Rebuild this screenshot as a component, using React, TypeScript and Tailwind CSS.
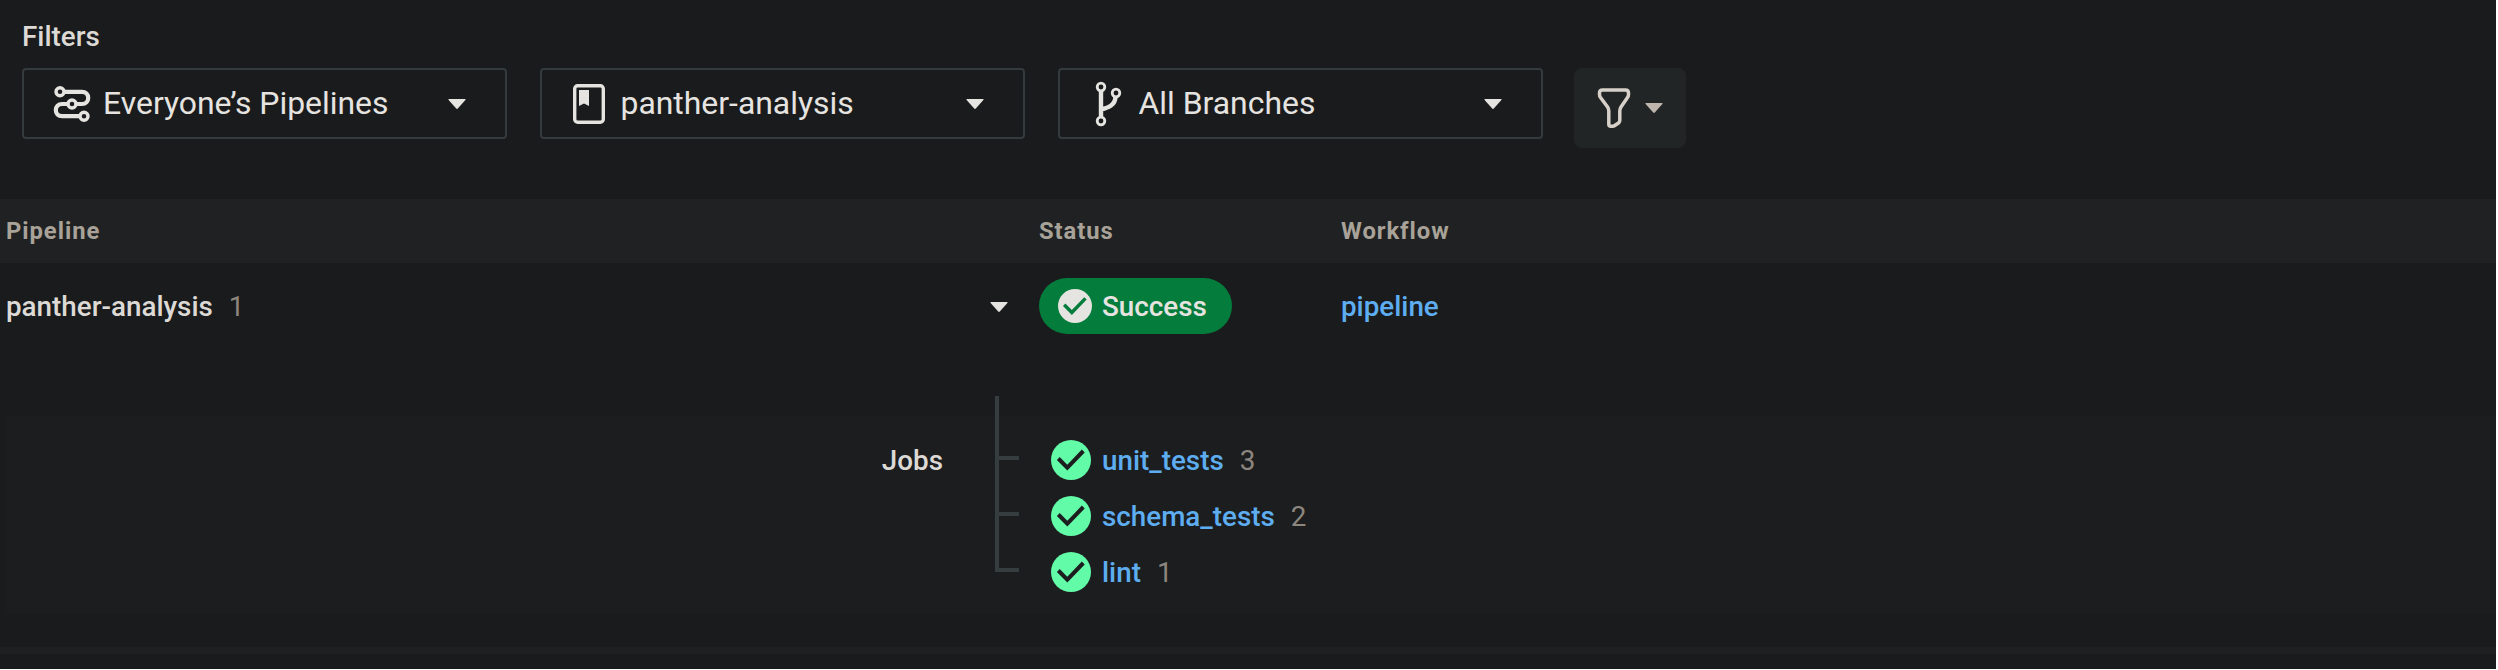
import React from "react";

const Caret = ({ className = "" }: { className?: string }) => (
  <svg viewBox="0 0 18 10" className={`h-[10px] w-[18px] shrink-0 ${className}`} fill="currentColor">
    <path d="M1 0h16q1 .3.4 1L9.800 9.500q-.8.800-1.600 0L.600 1Q0 .3 1 0z" />
  </svg>
);

const PipelinesIcon = () => (
  <svg viewBox="0 0 36 36" className="h-9 w-9 overflow-visible" fill="none" stroke="currentColor" strokeWidth="3.400">
    <circle cx="6" cy="5.800" r="4" />
    <circle cx="18" cy="18" r="4" />
    <circle cx="30" cy="30.200" r="4" />
    <path
      d="M10 5.800h18c3.800 0 6.200 2.500 6.200 6.100S31.800 18 28 18h-6M14 18H8c-3.800 0-6.200 2.500-6.200 6.100s2.400 6.100 6.200 6.100h18"
      strokeWidth="4.200"
    />
  </svg>
);

const RepoIcon = () => (
  <svg viewBox="0 0 32 40" className="h-10 w-8">
    <rect x="1.700" y="1.700" width="28.600" height="36.600" rx="3" fill="none" stroke="currentColor" strokeWidth="3.400" />
    <path d="M6 6h10v16l-5-2.500L6 22z" fill="currentColor" />
  </svg>
);

const BranchIcon = () => (
  <svg viewBox="0 0 28 46" className="h-[46px] w-7" fill="none" stroke="currentColor" strokeWidth="2.800">
    <circle cx="6" cy="6" r="3.800" />
    <circle cx="6" cy="40" r="3.800" />
    <circle cx="21" cy="12" r="3.800" />
    <path d="M6 10v26M6 28.500c8-2 14-4.500 14.500-12.500" strokeWidth="4.400" />
  </svg>
);

const FunnelIcon = () => (
  <svg viewBox="0 0 34 42" className="h-[42px] w-[34px]" fill="none" stroke="currentColor" strokeWidth="3.500" strokeLinejoin="round">
    <path d="M5.500 3h23c2 0 3 1.200 3 3v1.500c0 1.200-.3 2-1 3l-6.500 9.500q-1.200 1.800-1.200 4v9.500c0 1-.3 1.500-1 2.200l-4 2.800c-.8.600-1.500.800-2.500.800h-1.500c-1.400 0-2-.8-2-2V24q0-2.200-1.200-4L3.500 10.500c-.7-1-1-1.800-1-3V6c0-1.800 1-3 3-3z" />
  </svg>
);

const Check = ({ size, mark }: { size: string; mark: string }) => (
  <svg viewBox="0 0 40 40" className={`shrink-0 ${size}`}>
    <circle cx="20" cy="20" r="20" fill="currentColor" />
    <path d="M7.300 18.500l9 9.200L32.300 11" fill="none" className={mark} strokeWidth="4" />
  </svg>
);

const Select = ({ icon, label }: { icon: React.ReactNode; label: string }) => (
  <button className="flex h-[71px] w-[485px] items-center rounded-[4px] border-2 border-[#343b3c] pr-[39px] pl-[30px] text-[#e6e4e0]">
    {icon}
    <span className="grow pb-[2px] text-left text-[31.900px] leading-[40px]">{label}</span>
    <Caret />
  </button>
);

const jobs = [
  { name: "unit_tests", number: 3 },
  { name: "schema_tests", number: 2 },
  { name: "lint", number: 1 },
];

export default function App() {
  return (
    <div className="h-[670px] w-[2498px] overflow-hidden bg-white pr-[2px] pb-px font-['Roboto',sans-serif]">
      <main className="flex h-[669px] flex-col bg-[#1a1b1c]">
        <section className="h-[199px] shrink-0 pt-[20px] pl-[22px]">
          <h2 className="h-12 text-[27.800px] leading-[33px] font-medium text-[#dddad6]">Filters</h2>
          <div className="flex items-start gap-[33px]">
            <Select icon={<div className="flex w-[49px]"><PipelinesIcon /></div>} label="Everyone’s Pipelines" />
            <Select icon={<div className="flex w-[48.500px] pl-px"><RepoIcon /></div>} label="panther-analysis" />
            <Select icon={<div className="flex w-[48.500px] pl-[5px]"><BranchIcon /></div>} label="All Branches" />
            <button className="-ml-[2px] flex h-20 w-28 items-center justify-center gap-[14px] rounded-lg bg-[#222526] text-[#d6d0c8]">
              <FunnelIcon />
              <Caret className="text-[#beb6ad]" />
            </button>
          </div>
        </section>

        <div className="flex h-16 shrink-0 items-center bg-[#1f2122] pt-[2px] text-[23.800px] font-bold tracking-[0.950px] text-[#a8a298]">
          <div className="w-[1039px] pl-[6px]">Pipeline</div>
          <div className="w-[302px]">Status</div>
          <div>Workflow</div>
        </div>

        <div className="flex h-[153px] shrink-0 items-start pt-[15px] text-[27.800px]">
          <div className="flex h-14 w-[1039px] items-center pr-[31px] pl-[6px]">
            <span className="pt-[2px] font-medium text-[#dddad6]">panther-analysis</span>
            <span className="ml-[16px] grow pt-[2px] text-[#8d867e]">1</span>
            <Caret className="mt-px text-[#e6e4e0]" />
          </div>
          <div className="w-[302px]">
            <div className="flex h-14 w-[193px] items-center gap-[10px] rounded-full bg-[#047c3c] pl-[19px] font-medium text-[#e6e4e0]">
              <Check size="size-[34px]" mark="stroke-[#047c3c]" />
              <span className="pt-[2px]">Success</span>
            </div>
          </div>
          <a className="flex h-14 items-center pt-[2px] font-medium text-[#5dadf0]">pipeline</a>
        </div>

        <div className="ml-[7px] flex h-[198px] shrink-0 bg-[#1c1d1e] text-[27.800px]">
          <div className="w-[936px] pt-[28px] text-right leading-[34px] font-medium text-[#dddad6]">Jobs</div>
          <div className="-mt-[20px] ml-[52px] w-6">
            <div className="h-[64px] border-b-4 border-l-4 border-[#363d3f]" />
            <div className="h-14 border-b-4 border-l-4 border-[#363d3f]" />
            <div className="h-14 border-b-4 border-l-4 border-[#363d3f]" />
          </div>
          <div className="ml-8 pt-[16px]">
            {jobs.map((job) => (
              <div key={job.name} className="flex h-14 items-center text-[#62fba8]">
                <Check size="size-10" mark="stroke-[#1c1d1e]" />
                <a className="ml-[11px] pt-px font-medium text-[#5dadf0]">{job.name}</a>
                <span className="ml-[16px] pt-px text-[#8d867e]">{job.number}</span>
              </div>
            ))}
          </div>
        </div>
        <div className="mt-[33px] h-[7px] shrink-0 bg-[#1f2021]" />
      </main>
    </div>
  );
}
